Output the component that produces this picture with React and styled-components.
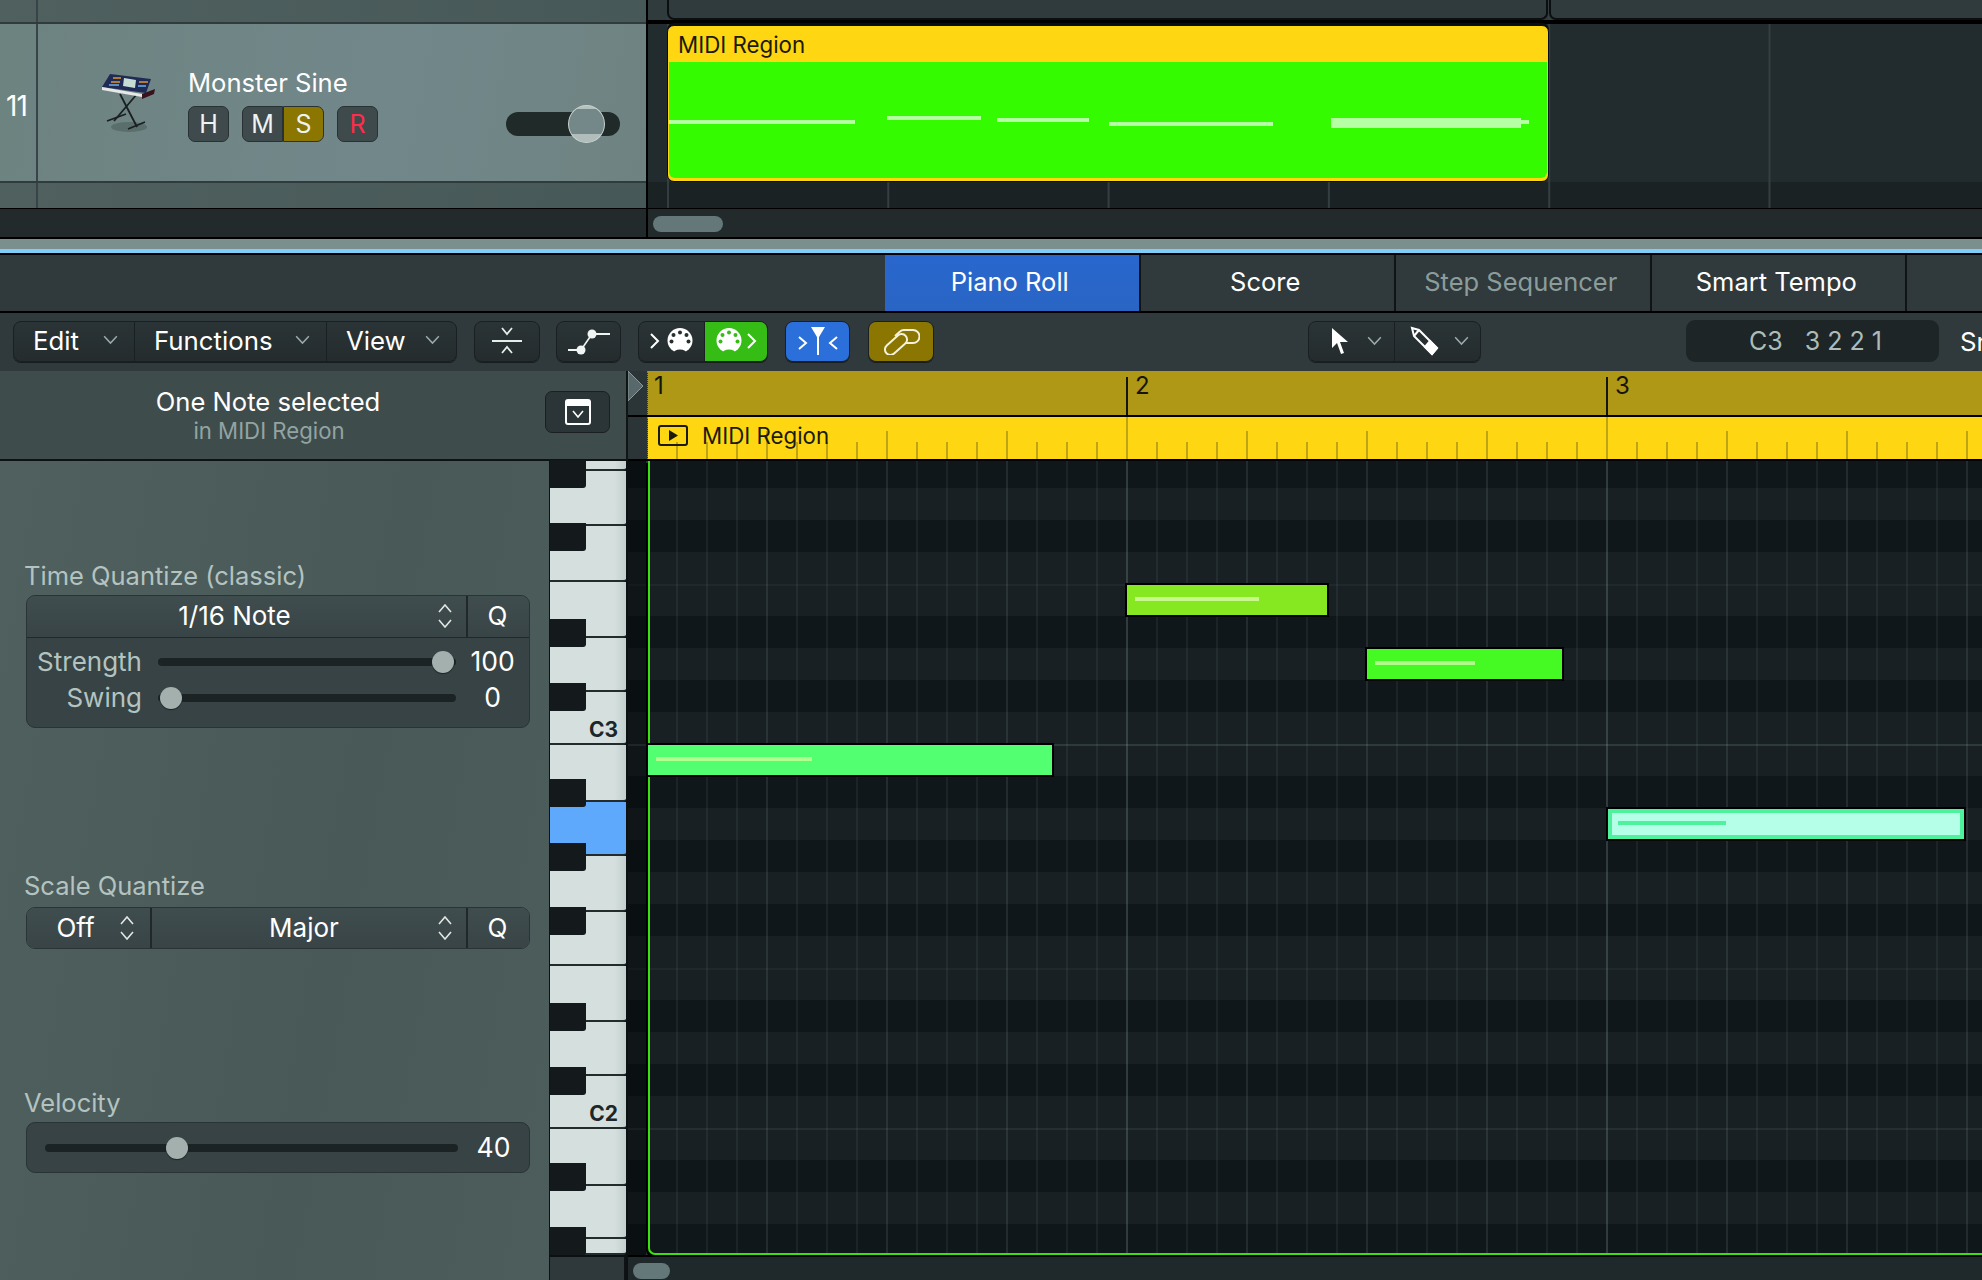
import styled, { createGlobalStyle } from "styled-components";

const GlobalStyle = createGlobalStyle`
  html, body {
    margin: 0;
    padding: 0;
    background: #000;
  }
  * {
    box-sizing: border-box;
  }
`;

const Page = styled.div`
  width: 1982px;
  height: 1280px;
  overflow: hidden;
  display: flex;
  flex-direction: column;
  background: #000;
  color: #fff;
  font-family: Inter, "Liberation Sans", sans-serif;
`;

/* ---------- arrange area ---------- */

const Arrange = styled.div`
  display: grid;
  grid-template-columns: 646px 1fr;
  column-gap: 2px;
  height: 208px;
  background: #000;
`;

const TrackList = styled.div`
  display: flex;
  flex-direction: column;
`;

const TrackRow = styled.div`
  display: flex;
  height: ${(p) => p.$h}px;
  background: ${(p) =>
    p.$selected
      ? "linear-gradient(100deg, #6d8380, #72878a 60%, #6e8381)"
      : "linear-gradient(100deg, #4f605f, #475858)"};
  border-bottom: ${(p) => (p.$line ? "2px solid #2f3b3c" : "none")};
`;

const TrackNumber = styled.div`
  width: 38px;
  flex: none;
  border-right: 2px solid #38444a;
  display: flex;
  align-items: center;
  padding: 7px 0 0 6px;
  font-size: 28px;
  letter-spacing: -1px;
`;

const TrackBody = styled.div`
  flex: 1;
  display: flex;
  align-items: flex-start;
  padding-left: 64px;
`;

const IconSlot = styled.div`
  margin-top: 49px;
  display: flex;
`;

const TrackInfo = styled.div`
  margin-left: 32px;
  margin-top: 43px;
  width: 318px;
`;

const TrackName = styled.div`
  font-size: 25.6px;
  line-height: 32px;
  height: 32px;
  margin-bottom: 7px;
`;

const TrackButtons = styled.div`
  display: flex;
`;

const TrackButton = styled.div`
  width: ${(p) => p.$w || 41}px;
  height: 36px;
  display: flex;
  align-items: center;
  justify-content: center;
  font-size: 25px;
  background: ${(p) => p.$bg || "#3e4a4c"};
  color: ${(p) => p.$color || "#eef2f1"};
  border: 1px solid #283133;
  border-radius: ${(p) => p.$radius || "7px"};
  margin-left: ${(p) => p.$ml || 0}px;
  margin-right: ${(p) => p.$mr || 0}px;
`;

const VolumeTrack = styled.div`
  position: relative;
  width: 114px;
  height: 24px;
  border-radius: 12px;
  background: #1f2a29;
  margin-top: 88px;
`;

const VolumeKnob = styled.div`
  position: absolute;
  left: 62px;
  top: -7px;
  width: 37px;
  height: 38px;
  border-radius: 50%;
  border: 1.5px solid #c9d4d1;
  background: linear-gradient(#b4c2bf 0 8%, #74888a 8% 78%, #b0bdba 78%);
`;

const Lanes = styled.div`
  display: flex;
  flex-direction: column;
`;

const Lane = styled.div`
  display: flex;
  height: ${(p) => p.$h}px;
  margin-bottom: ${(p) => p.$mb || 0}px;
  padding-left: ${(p) => p.$pl || 0}px;
  padding-top: ${(p) => p.$pt || 0}px;
  background-color: ${(p) => p.$bg};
  background-image: linear-gradient(90deg, #343e40 2px, transparent 2px);
  background-size: 220.3px 100%;
  background-position: 19px 0;
  background-repeat: repeat-x;
`;

const RegionStub = styled.div`
  width: ${(p) => p.$w}px;
  flex: none;
  height: 20px;
  background: #303b3d;
  border: 2px solid #0b0f10;
  border-top: none;
  border-radius: 0 0 7px 7px;
  margin-right: 1px;
`;

const Region = styled.div`
  width: 882px;
  height: 157px;
  flex: none;
  border-radius: 7px;
  border: 1px solid #0a0d0d;
  background: #ffd612;
  overflow: hidden;
  display: flex;
  flex-direction: column;
  padding: 0 1px 3px;
  box-shadow: 0 -2px 0 #0a0d0d;
`;

const RegionTitle = styled.div`
  height: 36px;
  flex: none;
  padding-left: 9px;
  display: flex;
  align-items: center;
  color: #1b1a06;
  font-size: 22.3px;
`;

const RegionNotes = styled.svg`
  display: block;
  flex: 1;
  width: 100%;
  background: #34fb00;
  border-radius: 0 0 6px 6px;
`;

const ScrollStrip = styled.div`
  display: grid;
  grid-template-columns: 646px 1fr;
  column-gap: 2px;
  height: 28px;
  margin-top: 1px;
  background: #000;
`;

const ScrollCell = styled.div`
  background: #222a2c;
  padding: 7px 0 0 5px;
`;

const Thumb = styled.div`
  width: ${(p) => p.$w}px;
  height: 16px;
  border-radius: 8px;
  background: #64787a;
`;

const Splitter = styled.div`
  height: 16px;
  margin-top: 2px;
  background: #7b908d;
  border-bottom: 2px solid #000;
  box-shadow: inset 0 -4px 0 #7fcdfb;
`;

/* ---------- tabs + toolbar ---------- */

const TabBar = styled.div`
  display: flex;
  height: 56px;
  padding-left: 885px;
  background: #30393b;
`;

const Tab = styled.div`
  width: 255.5px;
  flex: none;
  display: flex;
  align-items: center;
  justify-content: center;
  padding: 0 4px 3px 0;
  font-size: 25.5px;
  color: ${(p) => (p.$dim ? "#8b9d9b" : "#fff")};
  background: ${(p) =>
    p.$active ? "linear-gradient(#2867ce, #2a65c4)" : "transparent"};
  border-right: 2px solid #101415;
`;

const Toolbar = styled.div`
  display: flex;
  align-items: center;
  height: 58px;
  margin-top: 2px;
  padding: 0 0 2px 13px;
  background: #30393b;
  white-space: nowrap;
  overflow: hidden;
`;

const ToolGroup = styled.div`
  display: flex;
  flex: none;
  height: 41px;
  margin-left: ${(p) => p.$ml || 0}px;
  border: 1px solid #1a2022;
  border-radius: 8px;
  overflow: hidden;
  background: linear-gradient(#2a3335, #242c2e);
  box-shadow: 0 1px 0 #181d1f;
`;

const ToolCell = styled.div`
  width: ${(p) => p.$w}px;
  flex: none;
  display: flex;
  align-items: center;
  gap: ${(p) => p.$gap || 0}px;
  justify-content: ${(p) => (p.$spread ? "space-between" : "center")};
  padding: ${(p) =>
    p.$spread ? "0 16px 2px 19px" : `0 0 0 ${p.$pl || 0}px`};
  font-size: 25.8px;
  background: ${(p) => p.$bg || "transparent"};
  border-left: ${(p) => (p.$first ? "none" : "1px solid #1a2022")};
`;

const LcdField = styled.div`
  width: 253px;
  height: 42px;
  flex: none;
  margin-left: 205px;
  border-radius: 9px;
  background: #1d2527;
  color: #aebcb9;
  display: flex;
  align-items: center;
  padding-left: 63px;
  gap: 22px;
  font-size: 25px;
`;

const SnapLabel = styled.span`
  margin-left: 21px;
  font-size: 25.8px;
`;

/* ---------- editor ---------- */

const Editor = styled.div`
  flex: 1;
  display: grid;
  grid-template-columns: 628px 1fr;
  min-height: 0;
`;

const LeftPane = styled.div`
  display: flex;
  flex-direction: column;
`;

const InfoHeader = styled.div`
  height: 90px;
  flex: none;
  position: relative;
  background: #3f4c4c;
  border-right: 2px solid #101415;
  border-bottom: 2px solid #0e1213;
  padding: 16px 90px 0 0;
  text-align: center;
`;

const InfoTitle = styled.div`
  font-size: 25.6px;
  line-height: 30px;
`;

const InfoSub = styled.div`
  font-size: 22.2px;
  line-height: 28px;
  color: #92a4a2;
  padding-left: 2px;
`;

const InfoButton = styled.div`
  position: absolute;
  left: 545px;
  top: 20px;
  width: 65px;
  height: 42px;
  border-radius: 7px;
  border: 1px solid #1a2022;
  background: #2b3436;
  display: flex;
  align-items: center;
  justify-content: center;
`;

const LeftBody = styled.div`
  flex: 1;
  display: flex;
  min-height: 0;
`;

const Inspector = styled.div`
  width: 550px;
  flex: none;
  background: linear-gradient(100deg, #4f605f, #485958 60%, #4c5d5c);
  border-right: 1px solid #0e1213;
`;

const Section = styled.div`
  margin-top: ${(p) => p.$mt}px;
  padding-left: 26px;
`;

const SectionLabel = styled.div`
  font-size: 25.5px;
  line-height: 30px;
  height: 30px;
  margin: 0 0 ${(p) => p.$mb || 4}px -2px;
  color: #b4c3c0;
`;

const ControlBox = styled.div`
  width: 504px;
  border: 1px solid #2a3335;
  border-radius: 9px;
  background: #374344;
  overflow: hidden;
`;

const SelectRow = styled.div`
  display: flex;
  height: ${(p) => p.$h}px;
  background: linear-gradient(#404d4e, #384445);
  border-bottom: ${(p) => (p.$line ? "1px solid #20282a" : "none")};
`;

const SelectCell = styled.div`
  width: ${(p) => p.$w}px;
  flex: ${(p) => (p.$w ? "none" : 1)};
  position: relative;
  display: flex;
  align-items: center;
  justify-content: center;
  font-size: 26px;
  padding-right: ${(p) => p.$pr || 0}px;
  padding-bottom: 2px;
  border-left: ${(p) => (p.$first ? "none" : "2px solid #20282a")};
`;

const ChevronSlot = styled.span`
  position: absolute;
  right: ${(p) => p.$right}px;
  top: 7px;
  display: flex;
`;

const SliderList = styled.div`
  padding: 6px 0 11px;
`;

const SliderRow = styled.div`
  display: flex;
  align-items: center;
  height: 36px;
`;

const SliderLabel = styled.div`
  width: 115px;
  text-align: right;
  margin: -2px 16px 0 0;
  font-size: 26px;
  color: #b4c3c0;
`;

const SliderTrack = styled.div`
  position: relative;
  width: ${(p) => p.$w}px;
  height: 8px;
  flex: none;
  margin-left: ${(p) => p.$ml || 0}px;
  border-radius: 4px;
  background: #1b2325;
`;

const SliderKnob = styled.div`
  position: absolute;
  left: ${(p) => p.$at - 11}px;
  top: -7px;
  width: 22px;
  height: 22px;
  border-radius: 50%;
  background: #a3b0ad;
  box-shadow: 0 1px 1px #1b2325;
`;

const SliderValue = styled.div`
  flex: 1;
  margin-top: -2px;
  text-align: center;
  font-size: 26.5px;
`;

const VelocityBody = styled.div`
  height: 49px;
  display: flex;
  align-items: center;
`;

/* ---------- piano keys ---------- */

const Keyboard = styled.div`
  position: relative;
  width: 78px;
  flex: none;
  display: flex;
  flex-direction: column;
  background: #0c1012;
  padding-right: 2px;
`;

const WhiteKey = styled.div`
  height: ${(p) => p.$h}px;
  flex: none;
  background: ${(p) =>
    p.$lit ? "#5ea9fb" : "linear-gradient(90deg, #d5e0de 85%, #c3cfcd)"};
  border-bottom: 2px solid #232b2d;
  border-bottom-right-radius: 3px;
  display: flex;
  align-items: flex-end;
  justify-content: flex-end;
  padding: 0 8px 1px 0;
  color: #1d2628;
  font-size: 21px;
  font-weight: 700;
`;

const BlackKey = styled.div`
  position: absolute;
  left: 0;
  top: ${(p) => p.$top}px;
  width: 36px;
  height: 28px;
  border-radius: 0 0 3px 0;
  background: #14191b;
`;

const KeyFooter = styled.div`
  height: 24px;
  flex: none;
  margin-top: 2px;
  background: #2f393b;
  border-right: 2px solid #0e1213;
`;

/* ---------- right side ---------- */

const RightPane = styled.div`
  display: flex;
  flex-direction: column;
  min-width: 0;
`;

const Band = styled.div`
  display: flex;
  height: ${(p) => p.$h}px;
  margin-bottom: 2px;
`;

const Gutter = styled.div`
  width: 20px;
  flex: none;
  background: #2b3537;
  border-right: 1px dotted #758685;
  display: flex;
  align-items: flex-start;
`;

const Ruler = styled.div`
  flex: 1;
  display: flex;
  overflow: hidden;
  background: #ae9815;
`;

const BarCell = styled.div`
  width: 480px;
  flex: none;
  position: relative;
  padding-left: ${(p) => (p.$first ? 6 : 7)}px;
  font-size: 24px;
  line-height: 30px;
  color: #16150a;
  &::before {
    content: "";
    position: absolute;
    display: ${(p) => (p.$first ? "none" : "block")};
    left: -2px;
    top: 6px;
    bottom: 0;
    width: 2px;
    background: #16150a;
  }
`;

const TimeStrip = styled.div`
  flex: 1;
  display: flex;
  align-items: center;
  padding: 0 0 6px 10px;
  gap: 14px;
  font-size: 22.3px;
  color: #1b1a06;
  background-color: #ffd612;
  background-repeat: repeat-x;
  background-image: linear-gradient(90deg, #bfa415 2px, transparent 2px),
    linear-gradient(90deg, #bfa415 2px, transparent 2px),
    linear-gradient(90deg, #bfa415 2px, transparent 2px);
  background-size: 480px 100%, 120px 28px, 30px 17px;
  background-position: -2px bottom, -2px bottom, -2px bottom;
`;

const GridCanvas = styled.div`
  position: relative;
  height: 794px;
  overflow: hidden;
  display: flex;
  flex-direction: column;
`;

const laneLine = { strong: "#2e393a", mid: "#252e30", weak: "#1f282a" };

const PitchLane = styled.div`
  flex: none;
  height: ${(p) => p.$h || 32}px;
  background: ${(p) => (p.$black ? "#10171a" : "#182023")};
  border-top: ${(p) => (p.$sep ? `2px solid ${laneLine[p.$sep]}` : "none")};
`;

const GutterShade = styled.div`
  position: absolute;
  left: 0;
  top: 0;
  bottom: 0;
  width: 20px;
  background: rgba(0, 0, 0, 0.32);
`;

const GridLines = styled.div`
  position: absolute;
  left: 18px;
  top: 0;
  right: 0;
  bottom: 0;
  background-image: linear-gradient(90deg, rgba(170, 190, 190, 0.1) 2px, transparent 2px),
    linear-gradient(90deg, rgba(170, 190, 190, 0.05) 2px, transparent 2px),
    linear-gradient(90deg, rgba(170, 190, 190, 0.08) 2px, transparent 2px);
  background-size: 480px 100%, 120px 100%, 30px 100%;
`;

const RegionFrame = styled.div`
  position: absolute;
  left: 20px;
  top: 0;
  right: -4px;
  height: 794px;
  border-left: 2px solid #3ce010;
  border-bottom: 2px solid #3ce010;
  border-bottom-left-radius: 7px;
  box-shadow: -2px 2px 0 #000;
`;

const Note = styled.div`
  position: absolute;
  left: ${(p) => p.$x}px;
  top: ${(p) => p.$y}px;
  width: ${(p) => p.$w}px;
  height: 34px;
  background: ${(p) => p.$fill};
  border: 2px solid #000;
  box-shadow: ${(p) => (p.$selected ? "inset 0 0 0 4px #4df29c" : "none")};
`;

const NoteLine = styled.div`
  position: absolute;
  left: ${(p) => p.$x}px;
  top: 12px;
  width: ${(p) => p.$w}px;
  height: 4px;
  background: ${(p) => p.$fill};
`;

const BottomBar = styled.div`
  flex: 1;
  margin-top: 2px;
  background: #1f282a;
  padding: 6px 0 0 5px;
`;

/* ---------- drawings ---------- */

const Chevron = ({ size = 15, color = "#9aaaa8" }) => (
  <svg width={size} height={size * 0.62} viewBox="0 0 13 8" fill="none">
    <polyline points="1,1 6.5,7 12,1" stroke={color} strokeWidth="1.3" />
  </svg>
);

const UpDown = () => (
  <svg width="16" height="26" viewBox="0 0 16 26" fill="none" stroke="#dfe6e4" strokeWidth="1.6">
    <polyline points="2,9 8,2 14,9" />
    <polyline points="2,17 8,24 14,17" />
  </svg>
);

const SynthIcon = () => (
  <svg width="54" height="60" viewBox="0 0 54 60">
    <ellipse cx="27" cy="54" rx="18" ry="5" fill="#4d5f5e" opacity="0.6" />
    <g stroke="#1a1f22" strokeWidth="1.8" fill="none">
      <line x1="18" y1="21" x2="35" y2="54" />
      <line x1="35" y1="21" x2="12" y2="48" />
      <line x1="5" y1="48" x2="24" y2="41" />
      <line x1="26" y1="56" x2="43" y2="49" />
    </g>
    <polygon points="0,14 8,1 49,6 44,20" fill="#1f2a55" />
    <polygon points="0,14 40,21 40,24 0,17" fill="#e8e8e8" />
    <polygon points="40,21 53,16 52,21 40,26" fill="#38121d" />
    <polygon points="22,5 34,7 33,15 21,13" fill="#c7ddd4" />
    <g fill="#b07a3a">
      <rect x="11" y="4" width="8" height="2" />
      <rect x="9" y="8" width="9" height="2" />
      <rect x="37" y="8" width="9" height="2" />
    </g>
    <g fill="#5a8fc4">
      <rect x="7" y="11" width="10" height="2" />
      <rect x="36" y="12" width="8" height="2" />
    </g>
  </svg>
);

const CollapseIcon = () => (
  <svg width="32" height="28" viewBox="0 0 32 28" fill="none" stroke="#e6ecea" strokeWidth="1.8">
    <polyline points="11,1 16,7 21,1" />
    <line x1="1" y1="14" x2="31" y2="14" strokeWidth="2" />
    <polyline points="11,26 16,20 21,26" />
  </svg>
);

const AutomationIcon = () => (
  <svg width="46" height="28" viewBox="0 0 46 28" fill="#f0f4f3" stroke="#f0f4f3">
    <circle cx="26" cy="7" r="4.5" stroke="none" />
    <circle cx="15" cy="23" r="4.5" stroke="none" />
    <line x1="26" y1="7" x2="15" y2="23" strokeWidth="1.6" />
    <line x1="30" y1="7" x2="44" y2="7" strokeWidth="1.8" />
    <line x1="2" y1="23" x2="12" y2="23" strokeWidth="1.8" />
  </svg>
);

const MidiPlug = ({ hole }) => (
  <svg width="26" height="26" viewBox="0 0 26 26">
    <circle cx="13" cy="12.5" r="12.5" fill="#fff" />
    <ellipse cx="13" cy="26" rx="7" ry="4.5" fill={hole} />
    <rect x="0" y="24" width="5" height="2" fill={hole} />
    <rect x="21" y="24" width="5" height="2" fill={hole} />
    <g fill={hole}>
      <circle cx="13" cy="4.5" r="2" />
      <circle cx="6.5" cy="7" r="2" />
      <circle cx="19.5" cy="7" r="2" />
      <circle cx="4.5" cy="13.5" r="2" />
      <circle cx="21.5" cy="13.5" r="2" />
    </g>
  </svg>
);

const Caret = ({ flip }) => (
  <svg width="10" height="16" viewBox="0 0 10 16" fill="none" stroke="#fff" strokeWidth="2">
    <polyline points={flip ? "9,1 2,8 9,15" : "1,1 8,8 1,15"} />
  </svg>
);

const FilterIcon = () => (
  <svg width="40" height="28" viewBox="0 0 40 28" fill="none" stroke="#fff" strokeWidth="2">
    <polygon points="13,0 27,0 21,10 19,10" fill="#fff" stroke="none" />
    <line x1="20" y1="6" x2="20" y2="28" />
    <polyline points="1,10 8,16 1,22" />
    <polyline points="39,10 32,16 39,22" />
  </svg>
);

const LinkIcon = () => (
  <svg width="38" height="27" viewBox="0 0 38 27" fill="none" stroke="#f4f1dd" strokeWidth="2">
    <rect x="1" y="11" width="26" height="11" rx="5.5" transform="rotate(-42 14 16.5)" />
    <path d="M13 8 L18 3.5 A5.5 5.5 0 0 1 22 2 H31 A6.5 6.5 0 0 1 31 15 H24" />
  </svg>
);

const PointerIcon = () => (
  <svg width="18" height="28" viewBox="0 0 18 28">
    <polygon points="1,1 1,21 6,16 10,27 13,26 9,15 17,15" fill="#fff" />
  </svg>
);

const PencilIcon = () => (
  <svg width="30" height="30" viewBox="0 0 30 30" fill="none" stroke="#fff" strokeWidth="2">
    <polygon points="2,2 9,4 27,22 22,28 4,10" />
    <line x1="4" y1="10" x2="9" y2="4" />
    <polygon points="20,15 27,22 22,28 15,21" fill="#fff" />
  </svg>
);

const PanelIcon = () => (
  <svg width="26" height="26" viewBox="0 0 26 26">
    <rect x="1" y="1" width="24" height="24" rx="2" fill="none" stroke="#fff" strokeWidth="2" />
    <rect x="1" y="1" width="24" height="6" fill="#fff" />
    <polyline points="8,12 13,18 18,12" fill="none" stroke="#fff" strokeWidth="1.6" />
  </svg>
);

const PlayBox = () => (
  <svg width="30" height="21" viewBox="0 0 30 21">
    <rect x="1" y="1" width="28" height="19" rx="2" fill="none" stroke="#1b1a06" strokeWidth="2" />
    <polygon points="11,5 11,16 20,10.5" fill="#1b1a06" />
  </svg>
);

const PlayheadFlag = () => (
  <svg width="18" height="30" viewBox="0 0 18 30">
    <polygon points="0,0 15,15 0,30" fill="#59686a" stroke="#8a9896" strokeWidth="1" />
  </svg>
);

/* ---------- data ---------- */

const overviewNotes = [
  { x: 0, y: 58, w: 186, h: 4 },
  { x: 218, y: 54, w: 94, h: 4 },
  { x: 328, y: 56, w: 92, h: 4 },
  { x: 440, y: 60, w: 164, h: 4 },
  { x: 662, y: 56, w: 190, h: 10 },
  { x: 852, y: 58, w: 8, h: 4 },
];

const whiteKeys = [
  { h: 10 },
  { h: 55 },
  { h: 56 },
  { h: 56 },
  { h: 54 },
  { h: 53, label: "C3" },
  { h: 57 },
  { h: 54, lit: true },
  { h: 56 },
  { h: 54 },
  { h: 56 },
  { h: 54 },
  { h: 53, label: "C2" },
  { h: 57 },
  { h: 53 },
  { h: 16 },
];

const blackKeys = [-1, 62, 158, 222, 318, 382, 446, 542, 606, 702, 766];

const pitchLanes = [
  { black: true, h: 27 },
  {},
  { black: true },
  {},
  { sep: "weak" },
  { black: true },
  {},
  { black: true },
  {},
  { sep: "strong" },
  { black: true },
  {},
  { black: true },
  {},
  { black: true },
  {},
  { sep: "weak" },
  { black: true },
  {},
  { black: true },
  {},
  { sep: "mid" },
  { black: true },
  {},
  { black: true },
];

const notes = [
  { x: 18, y: 282, w: 408, fill: "#52ff70", lineX: 8, lineW: 156, line: "#b1ff8f" },
  { x: 497, y: 122, w: 204, fill: "#85e820", lineX: 8, lineW: 124, line: "#c8f78c" },
  { x: 737, y: 186, w: 199, fill: "#45f922", lineX: 8, lineW: 100, line: "#b0fb8c" },
  { x: 978, y: 346, w: 360, fill: "#b5ffe8", selected: true, lineX: 10, lineW: 108, line: "#4df29c" },
];

const App = () => {
  return (
    <Page>
      <GlobalStyle />

      <Arrange>
        <TrackList>
          <TrackRow $h={24} $line>
            <TrackNumber />
          </TrackRow>
          <TrackRow $h={159} $selected $line>
            <TrackNumber>11</TrackNumber>
            <TrackBody>
              <IconSlot>
                <SynthIcon />
              </IconSlot>
              <TrackInfo>
                <TrackName>Monster Sine</TrackName>
                <TrackButtons>
                  <TrackButton $mr={13}>H</TrackButton>
                  <TrackButton $radius="7px 0 0 7px">M</TrackButton>
                  <TrackButton $radius="0 7px 7px 0" $bg="#8a7600">
                    S
                  </TrackButton>
                  <TrackButton $ml={13} $color="#ff2d4a">
                    R
                  </TrackButton>
                </TrackButtons>
              </TrackInfo>
              <VolumeTrack>
                <VolumeKnob />
              </VolumeTrack>
            </TrackBody>
          </TrackRow>
          <TrackRow $h={25}>
            <TrackNumber />
          </TrackRow>
        </TrackList>
        <Lanes>
          <Lane $h={20} $mb={4} $pl={19} $bg="#303b3d">
            <RegionStub $w={881} />
            <RegionStub $w={440} />
          </Lane>
          <Lane $h={158} $pl={19} $pt={1} $bg="#222b2d">
            <Region>
              <RegionTitle>MIDI Region</RegionTitle>
              <RegionNotes viewBox="0 0 878 116" preserveAspectRatio="none">
                {overviewNotes.map((n) => (
                  <rect key={n.x} x={n.x} y={n.y} width={n.w} height={n.h} fill="#b5ffa5" />
                ))}
              </RegionNotes>
            </Region>
          </Lane>
          <Lane $h={26} $bg="#1b2224" />
        </Lanes>
      </Arrange>

      <ScrollStrip>
        <ScrollCell />
        <ScrollCell>
          <Thumb $w={70} />
        </ScrollCell>
      </ScrollStrip>
      <Splitter />

      <TabBar>
        <Tab $active>Piano Roll</Tab>
        <Tab>Score</Tab>
        <Tab $dim>Step Sequencer</Tab>
        <Tab>Smart Tempo</Tab>
      </TabBar>

      <Toolbar>
        <ToolGroup>
          <ToolCell $w={120} $first $spread>
            Edit <Chevron />
          </ToolCell>
          <ToolCell $w={192} $spread>
            Functions <Chevron />
          </ToolCell>
          <ToolCell $w={130} $spread>
            View <Chevron />
          </ToolCell>
        </ToolGroup>
        <ToolGroup $ml={17}>
          <ToolCell $w={64} $first>
            <CollapseIcon />
          </ToolCell>
        </ToolGroup>
        <ToolGroup $ml={16}>
          <ToolCell $w={63} $first>
            <AutomationIcon />
          </ToolCell>
        </ToolGroup>
        <ToolGroup $ml={17}>
          <ToolCell $w={65} $first $gap={7}>
            <Caret />
            <MidiPlug hole="#262e30" />
          </ToolCell>
          <ToolCell $w={63} $bg="#35bd15" $gap={5}>
            <MidiPlug hole="#35bd15" />
            <Caret />
          </ToolCell>
        </ToolGroup>
        <ToolGroup $ml={17}>
          <ToolCell $w={63} $first $bg="#2b6fdb">
            <FilterIcon />
          </ToolCell>
        </ToolGroup>
        <ToolGroup $ml={18}>
          <ToolCell $w={64} $first $bg="#8a7600">
            <LinkIcon />
          </ToolCell>
        </ToolGroup>
        <ToolGroup $ml={374}>
          <ToolCell $w={85} $first $gap={18} $pl={9}>
            <PointerIcon />
            <Chevron />
          </ToolCell>
          <ToolCell $w={86} $gap={14} $pl={4}>
            <PencilIcon />
            <Chevron />
          </ToolCell>
        </ToolGroup>
        <LcdField>
          <span>C3</span>
          <span>3 2 2 1</span>
        </LcdField>
        <SnapLabel>Snap</SnapLabel>
      </Toolbar>

      <Editor>
        <LeftPane>
          <InfoHeader>
            <InfoTitle>One Note selected</InfoTitle>
            <InfoSub>in MIDI Region</InfoSub>
            <InfoButton>
              <PanelIcon />
            </InfoButton>
          </InfoHeader>
          <LeftBody>
            <Inspector>
              <Section $mt={100}>
                <SectionLabel>Time Quantize (classic)</SectionLabel>
                <ControlBox>
                  <SelectRow $h={42} $line>
                    <SelectCell $first $pr={24}>
                      1/16 Note
                      <ChevronSlot $right={13}>
                        <UpDown />
                      </ChevronSlot>
                    </SelectCell>
                    <SelectCell $w={63} $pr={2}>
                      Q
                    </SelectCell>
                  </SelectRow>
                  <SliderList>
                    <SliderRow>
                      <SliderLabel>Strength</SliderLabel>
                      <SliderTrack $w={298}>
                        <SliderKnob $at={285} />
                      </SliderTrack>
                      <SliderValue>100</SliderValue>
                    </SliderRow>
                    <SliderRow>
                      <SliderLabel>Swing</SliderLabel>
                      <SliderTrack $w={298}>
                        <SliderKnob $at={13} />
                      </SliderTrack>
                      <SliderValue>0</SliderValue>
                    </SliderRow>
                  </SliderList>
                </ControlBox>
              </Section>

              <Section $mt={143}>
                <SectionLabel $mb={6}>Scale Quantize</SectionLabel>
                <ControlBox>
                  <SelectRow $h={40}>
                    <SelectCell $w={123} $first $pr={26}>
                      Off
                      <ChevronSlot $right={15}>
                        <UpDown />
                      </ChevronSlot>
                    </SelectCell>
                    <SelectCell $pr={10}>
                      Major
                      <ChevronSlot $right={13}>
                        <UpDown />
                      </ChevronSlot>
                    </SelectCell>
                    <SelectCell $w={63} $pr={2}>
                      Q
                    </SelectCell>
                  </SelectRow>
                </ControlBox>
              </Section>

              <Section $mt={139}>
                <SectionLabel>Velocity</SectionLabel>
                <ControlBox>
                  <VelocityBody>
                    <SliderTrack $w={413} $ml={18}>
                      <SliderKnob $at={132} />
                    </SliderTrack>
                    <SliderValue>40</SliderValue>
                  </VelocityBody>
                </ControlBox>
              </Section>
            </Inspector>

            <Keyboard>
              {whiteKeys.map((k, i) => (
                <WhiteKey key={i} $h={k.h} $lit={k.lit}>
                  {k.label}
                </WhiteKey>
              ))}
              {blackKeys.map((top) => (
                <BlackKey key={top} $top={top} />
              ))}
              <KeyFooter />
            </Keyboard>
          </LeftBody>
        </LeftPane>

        <RightPane>
          <Band $h={44}>
            <Gutter>
              <PlayheadFlag />
            </Gutter>
            <Ruler>
              <BarCell $first>1</BarCell>
              <BarCell>2</BarCell>
              <BarCell>3</BarCell>
            </Ruler>
          </Band>
          <Band $h={42}>
            <Gutter />
            <TimeStrip>
              <PlayBox />
              MIDI Region
            </TimeStrip>
          </Band>
          <GridCanvas>
            {pitchLanes.map((lane, i) => (
              <PitchLane key={i} $black={lane.black} $h={lane.h} $sep={lane.sep} />
            ))}
            <GutterShade />
            <GridLines />
            <RegionFrame />
            {notes.map((n) => (
              <Note key={n.x} $x={n.x} $y={n.y} $w={n.w} $fill={n.fill} $selected={n.selected}>
                <NoteLine $x={n.lineX} $w={n.lineW} $fill={n.line} />
              </Note>
            ))}
          </GridCanvas>
          <BottomBar>
            <Thumb $w={37} />
          </BottomBar>
        </RightPane>
      </Editor>
    </Page>
  );
};

export default App;
